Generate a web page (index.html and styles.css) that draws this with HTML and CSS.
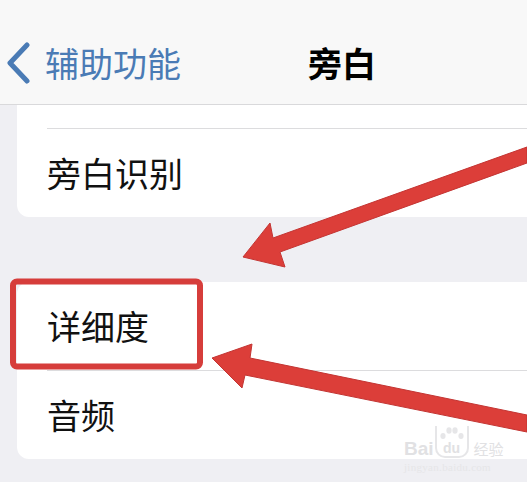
FILE: index.html
```html
<!DOCTYPE html>
<html>
	<head>
		<meta charset="utf-8">
		<title>旁白</title>
		<link rel="stylesheet" href="styles.css">
	</head>
	<body>
        <div class="screen">
            <div class="nav">
                <a class="back" href="javascript:void(0)">
                    <svg class="chevron" width="32" height="42" viewBox="0 0 32 42">
                        <polyline points="24,3 7,21 24,39" />
                    </svg>
                    <span>辅助功能</span>
                </a>
                <div class="title">旁白</div>
            </div>

            <div class="group group-first">
                <div class="row row-cut"></div>
                <div class="row">旁白识别</div>
            </div>

            <div class="group group-second">
                <div class="row">详细度</div>
                <div class="row">音频</div>
            </div>

            <!-- 标注：红框和箭头 -->
            <svg class="marks" width="527" height="482" viewBox="0 0 527 482">
                <rect x="13" y="281.5" width="187" height="85" rx="4" class="box" />
                <polygon class="arrow" points="243,257 270,223 273,238 527,147 527,163 280,252 285,267" />
                <polygon class="arrow" points="212,358 252,344 250,358 527,415 527,432 245,375 242,388" />
            </svg>

            <div class="watermark">
                <div class="wm-logo">
                    <span>Bai</span>
                    <span class="wm-du">
                        <svg class="paw" width="26" height="14" viewBox="0 0 26 14">
                            <ellipse cx="4" cy="10" rx="2.6" ry="3" />
                            <ellipse cx="10" cy="4.5" rx="2.6" ry="3.2" />
                            <ellipse cx="16" cy="4.5" rx="2.6" ry="3.2" />
                            <ellipse cx="22" cy="10" rx="2.6" ry="3" />
                        </svg>
                        du
                    </span>
                    <span class="wm-cn">经验</span>
                </div>
                <div class="wm-url">jingyan.baidu.com</div>
            </div>
        </div>
	</body>
</html>
```

FILE: styles.css
```css
*{
    padding: 0;
    margin: 0;
}
a {
    text-decoration:none;
}
html,body{
    width:100%;
    height:100%;
}
body {
    background-color:#efeff3;
    font-family:"Noto Sans CJK SC","Noto Sans",sans-serif;
    overflow:hidden;
}
.screen {
    position:relative;
    width:527px;
    height:482px;
    overflow:hidden;
}
.nav {
    display:flex;
    align-items:center;
    height:82px;
    padding-top:22px;
    background-color:#f8f8f8;
    border-bottom:1px solid #d9d9db;
}
.back {
    display:flex;
    align-items:center;
    width:305px;
    padding-left:3px;
    color:#4a7bb5;
    font-size:34px;
    line-height:1.2;
}
.chevron {
    margin-right:10px;
}
.chevron polyline {
    fill:none;
    stroke:#4a7bb5;
    stroke-width:5;
    stroke-linecap:round;
    stroke-linejoin:round;
}
.title {
    color:#000;
    font-size:34px;
    font-weight:700;
    line-height:1.2;
}
.group {
    margin-left:17px;
    margin-right:-40px;
    background-color:#fff;
    border-radius:12px;
}
.group-first {
    border-top-left-radius:0;
    border-top-right-radius:0;
}
.group-second {
    margin-top:65px;
}
.row {
    display:flex;
    align-items:center;
    height:88px;
    padding-left:30px;
    color:#111;
    font-size:34px;
    line-height:1.2;
    position:relative;
}
.row-cut {
    height:23px;
}
.row + .row {
    border-top:1px solid transparent;
}
.row + .row::before {
    content:"";
    position:absolute;
    left:30px;
    right:0;
    top:-1px;
    border-top:1px solid #dcdcde;
}
.marks {
    position:absolute;
    left:0;
    top:0;
}
.marks .box {
    fill:none;
    stroke:#d63d3b;
    stroke-width:6;
}
.marks .arrow {
    fill:#dc3e39;
    stroke:#c33533;
    stroke-width:1;
    stroke-linejoin:round;
}
.watermark {
    position:absolute;
    left:404px;
    top:426px;
    width:100px;
    white-space:nowrap;
    color:#e1e1e3;
}
.wm-logo {
    display:flex;
    align-items:flex-end;
    font-family:"Liberation Sans",sans-serif;
    font-size:19px;
    font-weight:700;
    line-height:1;
}
.wm-du {
    display:flex;
    flex-direction:column;
    align-items:center;
    margin-left:1px;
    padding:0 2px 1px;
    border-radius:0 0 10px 10px;
    border:2px solid #e6e6e8;
    border-top:none;
    font-size:14px;
}
.paw {
    fill:#e6e6e8;
    margin-bottom:1px;
}
.wm-cn {
    margin-left:5px;
    margin-bottom:2px;
    font-family:"Noto Sans CJK SC",sans-serif;
    font-size:15px;
    font-weight:400;
}
.wm-url {
    margin-top:3px;
    font-family:"Liberation Serif",serif;
    font-size:11px;
    letter-spacing:0.3px;
    color:#e6e6e8;
}
```
